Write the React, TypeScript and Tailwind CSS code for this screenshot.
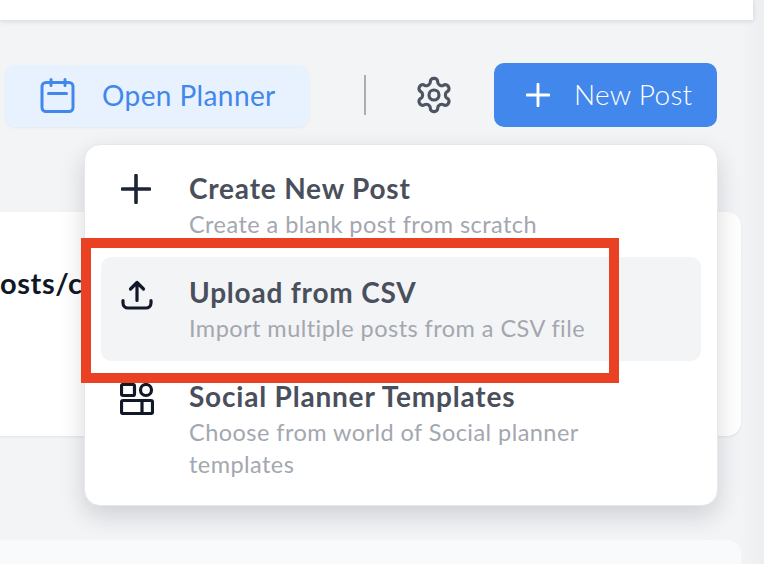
import React from "react";

function Calendar() {
  return (
    <svg width="36" height="36" viewBox="0 0 36 36" fill="none" stroke="#4287ec" strokeWidth="3" strokeLinecap="round" strokeLinejoin="round">
      <rect x="2" y="4.5" width="31" height="29" rx="4" />
      <path d="M11 1.5v6M25 1.5v6M8.5 15.5h18" />
    </svg>
  );
}

function Gear() {
  return (
    <svg width="40" height="40" viewBox="0 0 24 24" fill="none" stroke="#4b5563" strokeWidth="1.9" strokeLinecap="round" strokeLinejoin="round">
      <path d="M12.22 2h-.44a2 2 0 0 0-2 2v.18a2 2 0 0 1-1 1.73l-.43.25a2 2 0 0 1-2 0l-.15-.08a2 2 0 0 0-2.73.73l-.22.38a2 2 0 0 0 .73 2.73l.15.1a2 2 0 0 1 1 1.72v.51a2 2 0 0 1-1 1.74l-.15.09a2 2 0 0 0-.73 2.73l.22.38a2 2 0 0 0 2.73.73l.15-.08a2 2 0 0 1 2 0l.43.25a2 2 0 0 1 1 1.73V20a2 2 0 0 0 2 2h.44a2 2 0 0 0 2-2v-.18a2 2 0 0 1 1-1.73l.43-.25a2 2 0 0 1 2 0l.15.08a2 2 0 0 0 2.73-.73l.22-.39a2 2 0 0 0-.73-2.73l-.15-.08a2 2 0 0 1-1-1.74v-.5a2 2 0 0 1 1-1.74l.15-.09a2 2 0 0 0 .73-2.73l-.22-.38a2 2 0 0 0-2.73-.73l-.15.08a2 2 0 0 1-2 0l-.43-.25a2 2 0 0 1-1-1.73V4a2 2 0 0 0-2-2z" />
      <circle cx="12" cy="12" r="3" />
    </svg>
  );
}

function Plus({ color, size, width }: { color: string; size: number; width: number }) {
  return (
    <svg width={size} height={size} viewBox="0 0 30 30" fill="none" stroke={color} strokeWidth={width} strokeLinecap="round">
      <path d="M15 1.5v27M1.5 15h27" />
    </svg>
  );
}

function UploadIcon() {
  return (
    <svg width="32" height="32" viewBox="0 0 32 32" fill="none" stroke="#111827" strokeWidth="3.2" strokeLinecap="round" strokeLinejoin="round">
      <path d="M16 21.5V3.5M9.5 10 16 3.5 22.5 10" />
      <path d="M2 21.5v2.5a5 5 0 0 0 5 5h18a5 5 0 0 0 5-5v-2.5" />
    </svg>
  );
}

function TemplatesIcon() {
  return (
    <svg width="34" height="32" viewBox="0 0 34 32" fill="none" stroke="#111827" strokeWidth="3.2" strokeLinejoin="round">
      <rect x="1.5" y="1.5" width="13" height="11" rx="1.5" />
      <circle cx="26" cy="7" r="5.5" />
      <rect x="1.5" y="17.5" width="31" height="13" rx="1.5" />
      <path d="M22 17.5v13" />
    </svg>
  );
}

function MenuItem({
  icon,
  title,
  desc,
  active,
  iconClass,
}: {
  icon: React.ReactNode;
  title: string;
  desc: React.ReactNode;
  active?: boolean;
  iconClass: string;
}) {
  return (
    <div className={`flex rounded-[10px] pl-[20px] pr-4 pt-[17px] pb-[17px] ${active ? "bg-[#f3f4f6]" : ""}`}>
      <div className={`w-[68px] shrink-0 ${iconClass}`}>{icon}</div>
      <div>
        <div className="text-[28px] leading-[36px] font-bold text-[#4a4f5c] tracking-[0.8px]">{title}</div>
        <div className="mt-[2px] text-[23.5px] leading-[32px] text-[#a3a7af] tracking-[0.45px]">{desc}</div>
      </div>
    </div>
  );
}

export default function App() {
  return (
    <div className="relative h-[564px] w-[764px] overflow-hidden bg-[#f3f4f6] font-['Lato','Liberation_Sans',sans-serif]">
      <div className="absolute right-0 top-0 h-full w-[24px] bg-gradient-to-r from-transparent to-[#eceef1]" />
      <div className="relative h-[20px] w-[753px] bg-white shadow-[0_1px_5px_rgba(16,24,40,0.14)]" />

      <div className="relative mt-[43px] flex h-[64px] items-center pl-[5px]">
        <button className="mt-[2px] flex h-[62px] w-[304px] items-center rounded-[10px] bg-[#e8f2fe] pl-[35px] shadow-[0_1px_3px_rgba(16,24,40,0.05)]">
          <Calendar />
          <span className="ml-[26px] mt-[-2px] text-[28px] tracking-[0.4px] text-[#4287ec]">Open Planner</span>
        </button>
        <div className="ml-[55px] h-[40px] w-[2px] bg-[#a9adb4]" />
        <div className="ml-[48px]">
          <Gear />
        </div>
        <button className="ml-[40px] flex h-[64px] w-[223px] items-center rounded-[10px] bg-[#4287ec] pl-[32px]">
          <Plus color="#ffffff" size={24} width={3.6} />
          <span className="ml-[24px] mt-[-2px] text-[28px] font-light tracking-[0.3px] text-white">New Post</span>
        </button>
      </div>

      <div className="relative mt-[85px] h-[224px] w-[741px] rounded-r-[14px] bg-white pt-[53px] shadow-[0_1px_3px_rgba(16,24,40,0.08)]">
        <span className="block whitespace-nowrap text-[29px] leading-[36px] font-bold tracking-[0.6px] text-[#101828]">osts/csv</span>
      </div>

      <div className="relative mt-[104px] h-[40px] w-[741px] rounded-tr-[14px] bg-[#f9fafb]" />

      <div className="absolute left-[84px] top-[144px] w-[634px] rounded-[16px] border border-[#e4e7ec] bg-white px-[16px] pt-[8px] pb-[8px] shadow-[0_10px_24px_rgba(16,24,40,0.16)]">
        <MenuItem
          icon={<Plus color="#1d2433" size={30} width={3.6} />}
          iconClass="pt-[4px]"
          title="Create New Post"
          desc="Create a blank post from scratch"
        />
        <MenuItem active icon={<UploadIcon />} iconClass="pt-[5px]" title="Upload from CSV" desc="Import multiple posts from a CSV file" />
        <MenuItem
          icon={<TemplatesIcon />}
          iconClass="pt-[5px] ml-[-1px] w-[69px]"
          title="Social Planner Templates"
          desc={
            <>
              Choose from world of Social planner
              <br />
              templates
            </>
          }
        />
      </div>

      <div className="pointer-events-none absolute left-[81px] top-[238px] h-[145px] w-[538px] border-[10px] border-[#ea4125]" />
    </div>
  );
}
